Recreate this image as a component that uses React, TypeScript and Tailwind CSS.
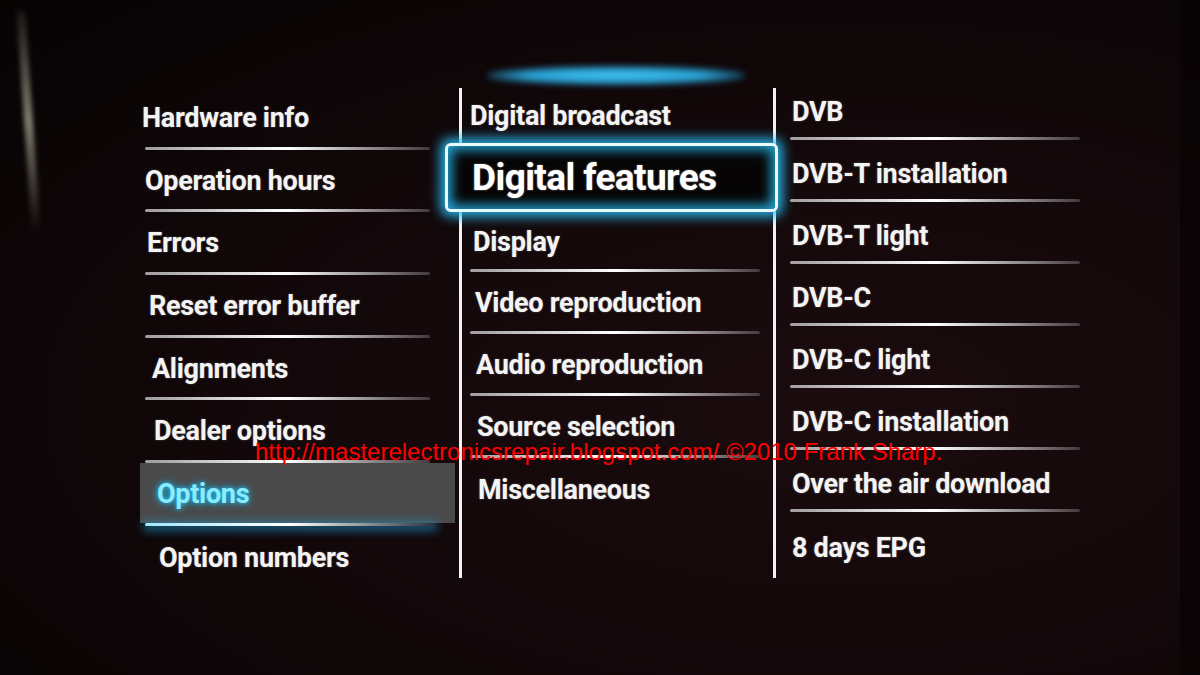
import React from "react";

const leftItems = [
  { t: "Hardware info", pl: "pl-[2px]" },
  { t: "Operation hours", pl: "pl-[5px]" },
  { t: "Errors", pl: "pl-[7px]" },
  { t: "Reset error buffer", pl: "pl-[9px]" },
  { t: "Alignments", pl: "pl-[12px]" },
  { t: "Dealer options", pl: "pl-[14px]" },
  { t: "Options", pl: "pl-[17px]", sel: true },
  { t: "Option numbers", pl: "pl-[19px]" },
];

const midItems = [
  { t: "Video reproduction", pl: "pl-[13px]" },
  { t: "Audio reproduction", pl: "pl-[14px]" },
  { t: "Source selection", pl: "pl-[15px]" },
  { t: "Miscellaneous", pl: "pl-[16px]", last: true },
];

const rightItems = [
  "DVB",
  "DVB-T installation",
  "DVB-T light",
  "DVB-C",
  "DVB-C light",
  "DVB-C installation",
  "Over the air download",
  "8 days EPG",
];

const lineCls =
  "h-[3px] rounded-full bg-linear-to-r from-white/60 via-white to-white/20";

const textCls =
  "text-[27px] font-bold tracking-[-0.3px] text-[#f4f4f4] leading-none [text-shadow:0_0_2px_rgba(255,255,255,0.35)]";

export default function App() {
  return (
    <div
      className="relative w-[1200px] h-[675px] overflow-hidden bg-[#120709] bg-[radial-gradient(ellipse_at_70%_60%,#1a0b0e_0%,#110709_55%,#060303_100%)]"
      style={{ fontFamily: "Roboto, 'Open Sans', sans-serif" }}
    >
      {/* bezel reflection */}
      <div className="absolute left-[24px] top-[10px] w-[9px] h-[222px] rotate-[-4deg] rounded-full bg-linear-to-b from-[#5a5a52]/20 via-[#a19e8c]/75 to-[#8a887a]/0 blur-[2px]" />
      <div className="absolute right-0 top-0 w-[20px] h-[675px] bg-[#070304]/70" />

      <div className="flex pt-[66px]">
        {/* left column */}
        <div className="ml-[140px] w-[315px] flex flex-col pt-[21px]">
          {leftItems.map((it, i) => (
            <div key={i} className="h-[62.7px] flex flex-col">
              <div
                className={`flex-1 flex items-center pt-[3px] ${it.pl} ${
                  it.sel ? "bg-[#4a4a4a]" : ""
                }`}
              >
                <span
                  className={
                    it.sel
                      ? "text-[27px] font-bold tracking-[-0.3px] leading-none text-[#8cecff] [text-shadow:0_0_4px_#1cc0f0,0_0_8px_#1aa8e0]"
                      : textCls
                  }
                >
                  {it.t}
                </span>
              </div>
              {i < leftItems.length - 1 &&
                (it.sel ? (
                  <div className="h-[3px] ml-[5px] w-[290px] rounded-full bg-linear-to-r from-[#9fe6ff] via-white to-[#7fd8ff]/20 shadow-[0_2px_10px_3px_rgba(30,170,230,0.55)]" />
                ) : (
                  <div className={`${lineCls} ml-[5px] w-[285px]`} />
                ))}
            </div>
          ))}
        </div>

        {/* middle column */}
        <div className="ml-[4px] w-[317px] flex flex-col">
          <div className="ml-[28px] w-[258px] h-[19px] rounded-[45%] bg-[radial-gradient(ellipse_at_center,#3fc0ef_0%,#2aa3d6_50%,rgba(30,130,180,0.4)_72%,transparent_90%)] blur-[3px]" />
          <div className="mt-[3px] h-[490px] border-x-[3px] border-[#f2f2f2] flex flex-col">
            <div className="h-[55px] flex items-center pt-[2px] pl-[8px]">
              <span className={textCls}>Digital broadcast</span>
            </div>
            <div className="-ml-[17px] w-[333px] h-[69px] rounded-[6px] border-[3px] border-[#e8fbff] bg-[#060404] shadow-[0_0_12px_5px_rgba(40,190,245,0.9),inset_0_0_12px_4px_rgba(40,190,245,0.85)] flex items-center pl-[24px]">
              <span className="text-[37px] font-bold tracking-[-0.6px] leading-none text-white [text-shadow:0_0_2px_rgba(255,255,255,0.5)]">
                Digital features
              </span>
            </div>
            <div className="h-[60px] flex flex-col">
              <div className="flex-1 flex items-center pt-[3px] pl-[11px]">
                <span className={textCls}>Display</span>
              </div>
              <div className={`${lineCls} ml-[8px] w-[290px]`} />
            </div>
            {midItems.map((it, i) => (
              <div key={i} className="h-[62px] flex flex-col">
                <div className={`flex-1 flex items-center pt-[3px] ${it.pl}`}>
                  <span className={textCls}>{it.t}</span>
                </div>
                {!it.last && <div className={`${lineCls} ml-[8px] w-[290px]`} />}
              </div>
            ))}
          </div>
        </div>

        {/* right column */}
        <div className="w-[305px] flex flex-col pt-[12px]">
          {rightItems.map((t, i) => (
            <div key={i} className="h-[62px] flex flex-col">
              <div className="flex-1 flex items-center pt-[10px] pl-[16px]">
                <span className={textCls}>{t}</span>
              </div>
              {i < rightItems.length - 1 && (
                <div className={`${lineCls} ml-[14px] w-[290px]`} />
              )}
            </div>
          ))}
        </div>
      </div>

      {/* watermark */}
      <div
        className="absolute left-[255px] top-[440px] text-[24px] leading-none text-[#ff0000] whitespace-nowrap"
        style={{ fontFamily: "'Liberation Sans', Arial, sans-serif" }}
      >
        http://masterelectronicsrepair.blogspot.com/ ©2010 Frank Sharp.
      </div>
    </div>
  );
}
